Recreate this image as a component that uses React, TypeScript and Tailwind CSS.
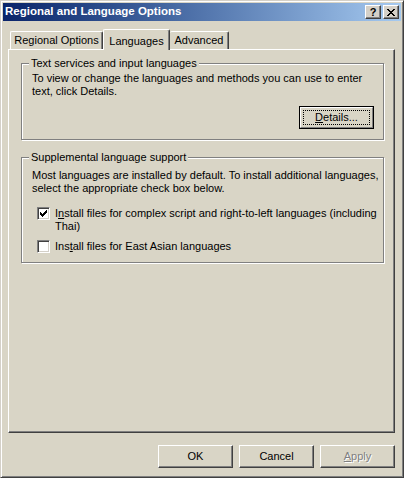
const font = "font-['Liberation_Sans',Arial,sans-serif]";

function Btn({ children, disabled }: { children: React.ReactNode; disabled?: boolean }) {
  return (
    <div className="w-[75px] h-[23px] border border-t-white border-l-white border-r-[#404040] border-b-[#404040] shadow-[inset_-1px_-1px_0_#808080] flex items-center justify-center">
      <span className={disabled ? "text-[#808080] [text-shadow:1px_1px_0_#fff]" : "text-black"}>{children}</span>
    </div>
  );
}

function Check({ checked }: { checked?: boolean }) {
  return (
    <div className="w-[13px] h-[13px] shrink-0 border border-t-[#808080] border-l-[#808080] border-r-white border-b-white shadow-[inset_1px_1px_0_#404040,inset_-1px_-1px_0_#d4d0c8] bg-white flex items-center justify-center">
      {checked && (
        <svg width="7" height="7" viewBox="0 0 7 7" shapeRendering="crispEdges">
          <path d="M0 2h1v3H0zM1 3h1v3H1zM2 4h1v3H2zM3 3h1v3H3zM4 2h1v3H4zM5 1h1v3H5zM6 0h1v3H6z" fill="#000" />
        </svg>
      )}
    </div>
  );
}

function Group({ title, className, children }: { title: string; className: string; children: React.ReactNode }) {
  return (
    <fieldset className={`ml-[12px] w-[363px] border border-[#808080] shadow-[inset_1px_1px_0_#fff,1px_1px_0_#fff] ${className}`}>
      <legend className="ml-[7px] px-[2px] leading-[13px] bg-[#d9d5c6]">{title}</legend>
      <div className="pl-[10px]">{children}</div>
    </fieldset>
  );
}

export default function App() {
  return (
    <div className={`w-[404px] h-[478px] bg-[#d9d5c6] border border-t-[#d4d0c8] border-l-[#d4d0c8] border-r-[#404040] border-b-[#404040] shadow-[inset_1px_1px_0_#fff,inset_-1px_-1px_0_#808080] p-[2px] flex flex-col text-[11px] text-black ${font}`}>
      {/* title bar */}
      <div className="h-[18px] flex items-center bg-gradient-to-r from-[#0a246a] to-[#a6caf0] pl-[2px] pr-[2px]">
        <span className="text-white font-bold text-[11.5px] flex-1">Regional and Language Options</span>
        <div className="flex gap-[2px]">
          <div className="w-[16px] h-[14px] bg-[#d4d0c8] border border-t-white border-l-white border-r-[#404040] border-b-[#404040] shadow-[inset_-1px_-1px_0_#808080] flex items-center justify-center">
            <span className="font-bold text-[11px] leading-none">?</span>
          </div>
          <div className="w-[16px] h-[14px] bg-[#d4d0c8] border border-t-white border-l-white border-r-[#404040] border-b-[#404040] shadow-[inset_-1px_-1px_0_#808080] flex items-center justify-center">
            <svg width="8" height="7" viewBox="0 0 8 7" shapeRendering="crispEdges">
              <path d="M0 0h2v1H0zM6 0h2v1H6zM1 1h2v1H1zM5 1h2v1H5zM2 2h4v1H2zM3 3h2v1H3zM2 4h4v1H2zM1 5h2v1H1zM5 5h2v1H5zM0 6h2v1H0zM6 6h2v1H6z" fill="#000" />
            </svg>
          </div>
        </div>
      </div>

      <div className="flex-1 flex flex-col pl-[5px] pr-[6px]">
        {/* tabs */}
        <div className="flex items-end mt-[8px] pl-[2px] h-[20px]">
          <div className="w-[93px] h-[18px] border-l border-t border-white border-r border-r-[#404040] shadow-[inset_-1px_0_0_#808080] rounded-t-[2px] flex items-center justify-center">Regional Options</div>
          <div className="relative z-10 w-[67px] h-[21px] -mb-[1px] bg-[#d9d5c6] border-l border-t border-white border-r border-r-[#404040] shadow-[inset_-1px_0_0_#808080] rounded-t-[2px] flex items-start justify-center pt-[3px]">Languages</div>
          <div className="w-[59px] h-[18px] border-t border-white border-r border-r-[#404040] shadow-[inset_-1px_0_0_#808080] rounded-t-[2px] flex items-center justify-center">Advanced</div>
        </div>

        {/* panel */}
        <div className="h-[384px] border border-t-white border-l-white border-r-[#404040] border-b-[#404040] shadow-[inset_-1px_-1px_0_#808080] flex flex-col">
          <Group title="Text services and input languages" className="mt-[7px] h-[83px]">
            <p className="leading-[13px] mt-[2px]">
              To view or change the languages and methods you can use to enter<br />text, click Details.
            </p>
            <div className="flex justify-end pr-[9px] mt-[8px]">
              <div className="w-[75px] h-[23px] border border-black">
                <div className="w-full h-full border border-t-white border-l-white border-r-[#808080] border-b-[#808080] p-[2px]">
                  <div className="w-full h-full border border-dotted border-black flex items-center justify-center">
                    <span><u>D</u>etails...</span>
                  </div>
                </div>
              </div>
            </div>
          </Group>

          <Group title="Supplemental language support" className="mt-[11px] h-[112px]">
            <p className="leading-[13px] mt-[5px]">
              Most languages are installed by default. To install additional languages,<br />select the appropriate check box below.
            </p>
            <div className="flex items-start gap-[5px] ml-[5px] mt-[12px]">
              <Check checked />
              <span className="leading-[13px]">
                I<u>n</u>stall files for complex script and right-to-left languages (including<br />Thai)
              </span>
            </div>
            <div className="flex items-start gap-[5px] ml-[5px] mt-[7px]">
              <Check />
              <span className="leading-[13px]">Ins<u>t</u>all files for East Asian languages</span>
            </div>
          </Group>
        </div>

        {/* bottom buttons */}
        <div className="flex justify-end gap-[6px] mt-[12px]">
          <Btn>OK</Btn>
          <Btn>Cancel</Btn>
          <Btn disabled><u>A</u>pply</Btn>
        </div>
      </div>
    </div>
  );
}
